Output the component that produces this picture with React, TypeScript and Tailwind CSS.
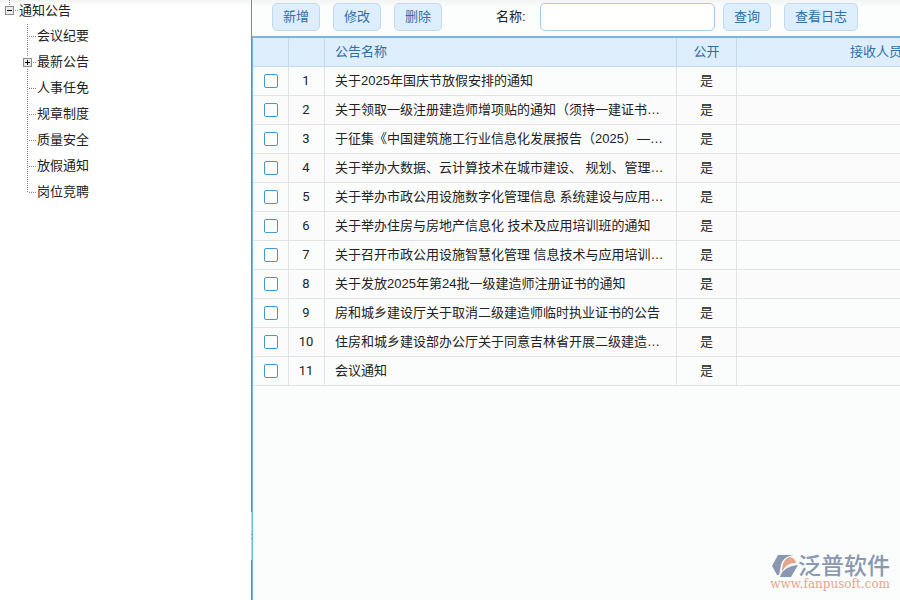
import type { ReactNode } from 'react';

const treeItems = [
  { name: '会议纪要' },
  { name: '最新公告', expandable: true },
  { name: '人事任免' },
  { name: '规章制度' },
  { name: '质量安全' },
  { name: '放假通知' },
  { name: '岗位竞聘' },
];

const notices = [
  '关于2025年国庆节放假安排的通知',
  '关于领取一级注册建造师增项贴的通知（须持一建证书…',
  '于征集《中国建筑施工行业信息化发展报告（2025）—…',
  '关于举办大数据、云计算技术在城市建设、 规划、管理…',
  '关于举办市政公用设施数字化管理信息 系统建设与应用…',
  '关于举办住房与房地产信息化 技术及应用培训班的通知',
  '关于召开市政公用设施智慧化管理 信息技术与应用培训…',
  '关于发放2025年第24批一级建造师注册证书的通知',
  '房和城乡建设厅关于取消二级建造师临时执业证书的公告',
  '住房和城乡建设部办公厅关于同意吉林省开展二级建造…',
  '会议通知',
];

function ToggleBox({ cy, plus }: { cy: number; plus?: boolean }) {
  return (
    <g>
      <rect x="3" y={cy - 6} width="11" height="11" fill="#fff" />
      <rect x="4.5" y={cy - 4.5} width="8" height="8" rx="1" fill="#ececec" stroke="#8b8b8b" />
      <path d={`M6 ${cy - 0.5}h5`} stroke="#000" />
      {plus && <path d={`M8.5 ${cy - 3}v5`} stroke="#000" />}
    </g>
  );
}

function Tree() {
  return (
    <nav className="text-[#222]" aria-label="公告分类">
      <button type="button" className="mb-px flex h-[22px] items-center pl-px leading-5">
        <svg width="18" height="22" shapeRendering="crispEdges" aria-hidden="true">
          <path d="M8.5 0v6M14 10.5h4" stroke="#8a8a8a" strokeDasharray="1 1" fill="none" />
          <ToggleBox cy={11} />
        </svg>
        通知公告
      </button>
      <ul>
        {treeItems.map((item, i) => {
          const last = i === treeItems.length - 1;
          return (
            <li key={item.name}>
              <button type="button" className="flex h-[26px] items-center pl-[19px] leading-[26px]">
                <svg width="18" height="26" shapeRendering="crispEdges" aria-hidden="true">
                  <path
                    d={`M8.5 ${i === 0 ? 1 : 0}V${last ? 14 : 26}M10 13.5h8`}
                    stroke="#8a8a8a"
                    strokeDasharray="1 1"
                    fill="none"
                  />
                  {item.expandable && <ToggleBox cy={14} plus />}
                </svg>
                {item.name}
              </button>
            </li>
          );
        })}
      </ul>
    </nav>
  );
}

function ToolButton({ children }: { children: ReactNode }) {
  return (
    <button
      type="button"
      className="h-7 shrink-0 rounded-[5px] border border-[#c1dbee] bg-[#dfeefd] px-[10px] leading-5 text-[#2e6fa7]"
    >
      {children}
    </button>
  );
}

function Toolbar() {
  return (
    <form className="flex h-[38px] items-start border-b-2 border-[#7ab4e0] bg-linear-to-b from-[#f3f4f4] to-[#fcfdfd] to-20% pt-[3px] pl-5">
      <div className="flex gap-[13px]">
        <ToolButton>新增</ToolButton>
        <ToolButton>修改</ToolButton>
        <ToolButton>删除</ToolButton>
      </div>
      <label htmlFor="name" className="ml-[54px] w-11 shrink-0 leading-7 text-[#222]">
        名称:
      </label>
      <input
        id="name"
        type="text"
        className="mr-2 h-7 w-[175px] rounded-[5px] border border-[#a5c9e6] bg-white px-2 outline-none"
      />
      <div className="flex gap-[13px]">
        <ToolButton>查询</ToolButton>
        <ToolButton>查看日志</ToolButton>
      </div>
    </form>
  );
}

const headCell = 'border-r border-b border-[#c3daee] px-[10px] font-normal leading-7';
const cell = 'border-r border-b border-[#e3e3e3] px-[10px] leading-7';

function NoticeTable() {
  return (
    <table className="w-[763px] table-fixed border-separate border-spacing-0 text-[#222]">
      <colgroup>
        <col className="w-9" />
        <col className="w-9" />
        <col className="w-[352px]" />
        <col className="w-[60px]" />
        <col />
      </colgroup>
      <thead className="bg-[#dfeefd] text-[#2e6fa7]">
        <tr>
          <th className={headCell} />
          <th className={headCell} />
          <th className={`${headCell} text-left`}>公告名称</th>
          <th className={headCell}>公开</th>
          <th className={headCell}>接收人员</th>
        </tr>
      </thead>
      <tbody>
        {notices.map((title, i) => (
          <tr key={title} className="odd:bg-[#fbfdfc] even:bg-[#fcfbfc]">
            <td className="border-r border-b border-[#e3e3e3]">
              <input
                type="checkbox"
                aria-label={title}
                className="mx-auto block size-[14px] appearance-none rounded-[2px] border border-[#4795d1] bg-white"
              />
            </td>
            <td className="border-r border-b border-[#e3e3e3] pr-px text-center font-[Roboto,sans-serif] leading-7">
              {i + 1}
            </td>
            <td className={`${cell} truncate`}>{title}</td>
            <td className={`${cell} text-center`}>是</td>
            <td className={cell} />
          </tr>
        ))}
      </tbody>
    </table>
  );
}

function Watermark() {
  return (
    <div className="absolute right-[10px] bottom-[10px] flex flex-col items-end">
      <div className="flex items-center">
        <svg width="26" height="22" viewBox="0 0 26 22" aria-hidden="true">
          <path d="M6 0H22C14 1 10 5 9 10C8 14 8 17 7 20L5 20L0 11Z" fill="#8997b1" />
          <path d="M10 17C10 8 13 3 18 2C22 3 24 6 24 8C17 8 13 11 10 17Z" fill="#e4a58c" />
          <path d="M8 22C10 15 16 11 26 10L19 22Z" fill="#8997b1" />
        </svg>
        <span className="text-[23px] leading-6 font-medium text-[#8997b1]">泛普软件</span>
      </div>
      <span className="font-['DejaVu_Serif',serif] text-[12px] leading-3 text-[#e4a58c]">www.fanpusoft.com</span>
    </div>
  );
}

export default function App() {
  return (
    <div className="flex h-screen overflow-hidden bg-white font-['Liberation_Sans','Noto_Sans_CJK_SC',sans-serif] text-[13px]">
      <aside className="w-[251px] shrink-0 bg-linear-to-b from-[#f3f4f4] to-white to-1%">
        <Tree />
      </aside>
      <div className="flex w-px shrink-0 flex-col justify-end bg-[#5b93bf] pb-10">
        <div className="flex h-12 flex-col items-center justify-center gap-[3px] bg-[#b9d6f5]">
          <i className="size-px bg-[#5b93bf]" />
          <i className="size-px bg-[#5b93bf]" />
        </div>
      </div>
      <main className="relative flex min-w-0 flex-1 flex-col overflow-hidden bg-[#fbfdfc]">
        <Toolbar />
        <section className="flex-1 overflow-hidden border-l border-[#73b5e8]">
          <NoticeTable />
        </section>
        <Watermark />
      </main>
    </div>
  );
}
